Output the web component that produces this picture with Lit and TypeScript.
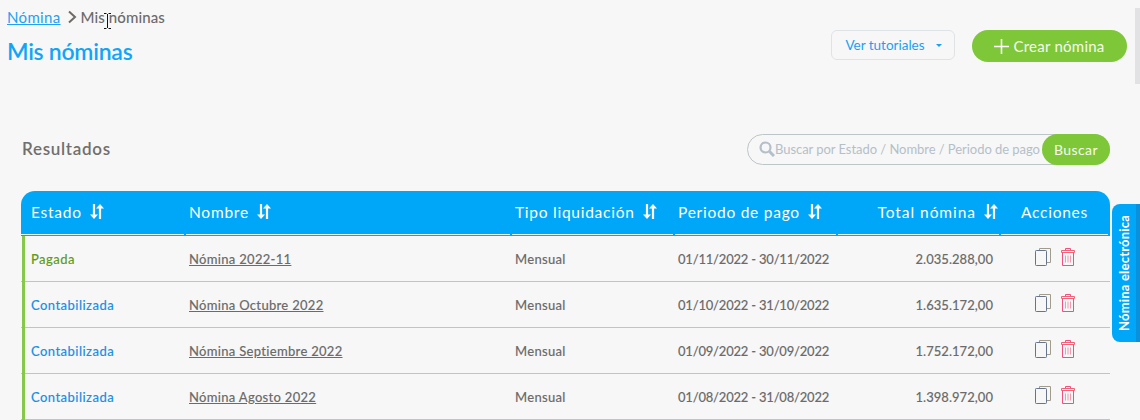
import { LitElement, html, css } from "lit";
import { customElement } from "lit/decorators.js";

const rows = [
  ["Pagada", "Nómina 2022-11", "Mensual", "01/11/2022 - 30/11/2022", "2.035.288,00"],
  ["Contabilizada", "Nómina Octubre 2022", "Mensual", "01/10/2022 - 31/10/2022", "1.635.172,00"],
  ["Contabilizada", "Nómina Septiembre 2022", "Mensual", "01/09/2022 - 30/09/2022", "1.752.172,00"],
  ["Contabilizada", "Nómina Agosto 2022", "Mensual", "01/08/2022 - 31/08/2022", "1.398.972,00"],
];

const sortIcon = html`<svg class="sort" width="14" height="15" viewBox="0 0 14 15" fill="#fff" stroke="none">
  <path d="M2.9 0h2.2v10.5H8L4 15 0 10.5h2.9z"/>
  <path d="M8.9 15h2.2V4.5H14L10 0 6 4.5h2.9z"/>
</svg>`;

const copyIcon = html`<svg width="16" height="18" viewBox="0 0 16 18" fill="none" stroke-width="1">
  <path d="M4.5 2.5v-2h11v14h-4" stroke="#a29c8c"/>
  <rect x=".5" y="2.5" width="11" height="15" rx=".8" stroke="#66758c"/>
</svg>`;

const trashIcon = html`<svg width="14" height="18" viewBox="0 0 14 18" fill="none" stroke="#f4507f" stroke-width="1">
  <path d="M4.5 2V.5h5V2" />
  <path d="M.5 2.5h13v2H.5z" stroke="#f0647a"/>
  <path d="M1.5 4.5v13h11v-13" />
  <path d="M4.5 7.5v7M7 7.5v7M9.5 7.5v7" stroke="#f29aae"/>
</svg>`;

@customElement("app-root")
export class AppRoot extends LitElement {
  static styles = css`
    :host {
      display: block;
      width: 1140px;
      height: 420px;
      overflow: hidden;
      background: #f7f7f7;
      font-family: "Lato", "Noto Sans", sans-serif;
      color: #6b6b6b;
      position: relative;
    }
    .page { padding: 7px 13px 0 7px; display: flex; flex-direction: column; }
    .crumbs { display: flex; align-items: center; height: 20px; font-size: 15px; letter-spacing: .35px; }
    .crumbs a { color: #1ea1f2; text-decoration: underline; }
    .crumbs svg { margin: 0 4px 0 6px; }
    .crumbs span { letter-spacing: .1px; font-weight: 500; }
    .head { display: flex; justify-content: space-between; align-items: flex-start; height: 106px; }
    h1 { margin: 10px 0 0; font-size: 23px; line-height: 28px; font-weight: 600; color: #12a5f7; letter-spacing: -.25px; }
    .actions { display: flex; gap: 17px; margin-top: 3px; }
    .tut {
      width: 124px; height: 30px; box-sizing: border-box; border: 1px solid #dfe3e6; border-radius: 6px;
      display: flex; align-items: center; justify-content: center; gap: 11px;
      color: #1c9ff0; font-size: 13.5px; letter-spacing: 0; padding-left: 1px;
    }
    .caret { width: 0; height: 0; border: 3.5px solid transparent; border-top-color: #1c9ff0; border-bottom: 0; }
    .create {
      width: 155px; height: 32px; border-radius: 16px; background: #7dc738; color: #f5f9ef;
      display: flex; align-items: center; justify-content: center; gap: 4px; font-size: 15px; letter-spacing: .25px;
    }
    .bar { display: flex; justify-content: space-between; align-items: center; padding-left: 15px; margin-right: 17px; height: 32px; margin-bottom: 26px; }
    .bar h2 { margin: -2px 0 0; font-size: 17px; font-weight: 600; color: #6f6f6f; letter-spacing: .7px; }
    .search {
      width: 363px; height: 31px; box-sizing: border-box; border: 1px solid #bcc6c9; border-radius: 16px;
      display: flex; align-items: center; padding-left: 11px;
    }
    .search svg { flex: none; }
    .ph { flex: 1; color: #b4bfc9; font-size: 13px; letter-spacing: -.05px; white-space: nowrap; }
    .btn {
      flex: none; width: 68px; height: 31px; margin: -1px -1px -1px 0; border-radius: 16px; background: #7dc738; color: #f7fbf2;
      display: flex; align-items: center; justify-content: center; font-size: 14px; letter-spacing: .4px;
    }
    .table { margin-left: 14px; width: 1089px; }
    .row { display: grid; grid-template-columns: 165px 326px 163px 163px 163px 109px; }
    .thead { background: #00a6f7; border-radius: 14px 14px 0 0; color: #fff; height: 45px; font-size: 15.5px; letter-spacing: .75px; }
    .th {
      display: flex; align-items: center; gap: 8px; padding-left: 3px; box-sizing: border-box; height: 44px;
      border-bottom: 1px solid #e6f6ff; margin-right: 2px; padding-bottom: 2px; white-space: nowrap;
    }
    .th:first-child { padding-left: 10px; }
    .th.r { justify-content: flex-end; padding-right: 1px; letter-spacing: .95px; }
    .th.c { justify-content: center; padding-left: 0; margin-right: 2px; }
    .tr { height: 45px; border-bottom: 1px solid #bcc6c6; font-size: 13px; font-weight: 500; letter-spacing: .3px; position: relative; -webkit-text-stroke: .1px currentColor; }
    .tr::before { content: ""; position: absolute; left: 1px; top: 0; bottom: -1px; width: 3px; background: #86c84a; }
    .td { display: flex; align-items: center; padding-left: 3px; white-space: nowrap; color: #6b6b6b; }
    .td:first-child { padding-left: 10px; letter-spacing: .45px; }
    .td.pagada { color: #5f9a1c; }
    .td.conta { color: #1a8fe3; }
    .td.name { text-decoration: underline; }
    .td.date { letter-spacing: -.2px; }
    .td.r { justify-content: flex-end; padding-right: 8px; letter-spacing: .05px; }
    .td.c { justify-content: flex-start; gap: 10px; padding: 0 0 4px 34px; }
    .side {
      position: absolute; right: 0; top: 204px; width: 28px; height: 138px; box-sizing: border-box;
      background: #00a6f7; border-radius: 8px 0 0 8px; border-right: 4px solid #0b90dc;
      color: #fff; font-size: 13px; font-weight: 700; letter-spacing: .2px;
      display: flex; align-items: center; justify-content: center;
    }
    .side span { writing-mode: vertical-rl; transform: rotate(180deg); white-space: nowrap; }
    .scroll { position: absolute; right: 0; top: 8px; width: 5px; height: 76px; background: #e2e2e4; }
    .cursor { position: absolute; left: 104px; top: 13px; }
  `;

  render() {
    const cols = ["Estado", "Nombre", "Tipo liquidación", "Periodo de pago"];
    return html`
      <div class="page">
        <div class="crumbs">
          <a>Nómina</a>
          <svg width="10" height="14" viewBox="0 0 10 14" fill="none" stroke="#6f6a66" stroke-width="2"><path d="M2 1.5 8 7l-6 5.5"/></svg>
          <span>Mis nóminas</span>
        </div>
        <div class="head">
          <h1>Mis nóminas</h1>
          <div class="actions">
            <div class="tut">Ver tutoriales <i class="caret"></i></div>
            <div class="create">
              <svg width="15" height="15" viewBox="0 0 15 15" stroke="#fff" stroke-width="1.6"><path d="M7.5 0v15M0 7.5h15"/></svg>
              Crear nómina
            </div>
          </div>
        </div>
        <div class="bar">
          <h2>Resultados</h2>
          <div class="search">
            <svg width="16" height="16" viewBox="0 0 16 16" fill="none" stroke="#b4bfc9"><circle cx="6.5" cy="6.5" r="5" stroke-width="2.2"/><path d="M10.5 10.5 15 15" stroke-width="3"/></svg>
            <span class="ph">Buscar por Estado / Nombre / Periodo de pago</span>
            <span class="btn">Buscar</span>
          </div>
        </div>
        <div class="table">
          <div class="row thead">
            ${cols.map((c) => html`<div class="th">${c} ${sortIcon}</div>`)}
            <div class="th r">Total nómina ${sortIcon}</div>
            <div class="th c">Acciones</div>
          </div>
          ${rows.map(
            (r) => html`<div class="row tr">
              <div class="td ${r[0] === "Pagada" ? "pagada" : "conta"}">${r[0]}</div>
              <div class="td name">${r[1]}</div>
              <div class="td">${r[2]}</div>
              <div class="td date">${r[3]}</div>
              <div class="td r">${r[4]}</div>
              <div class="td c">${copyIcon}${trashIcon}</div>
            </div>`
          )}
        </div>
      </div>
      <div class="scroll"></div>
      <div class="side"><span>Nómina electrónica</span></div>
      <svg class="cursor" width="7" height="16" viewBox="0 0 7 16" fill="none" stroke="#111" stroke-width="1"><path d="M0 .5h2.5M4.5 .5H7M3.5 1v14M0 15.5h2.5M4.5 15.5H7"/></svg>
    `;
  }
}
